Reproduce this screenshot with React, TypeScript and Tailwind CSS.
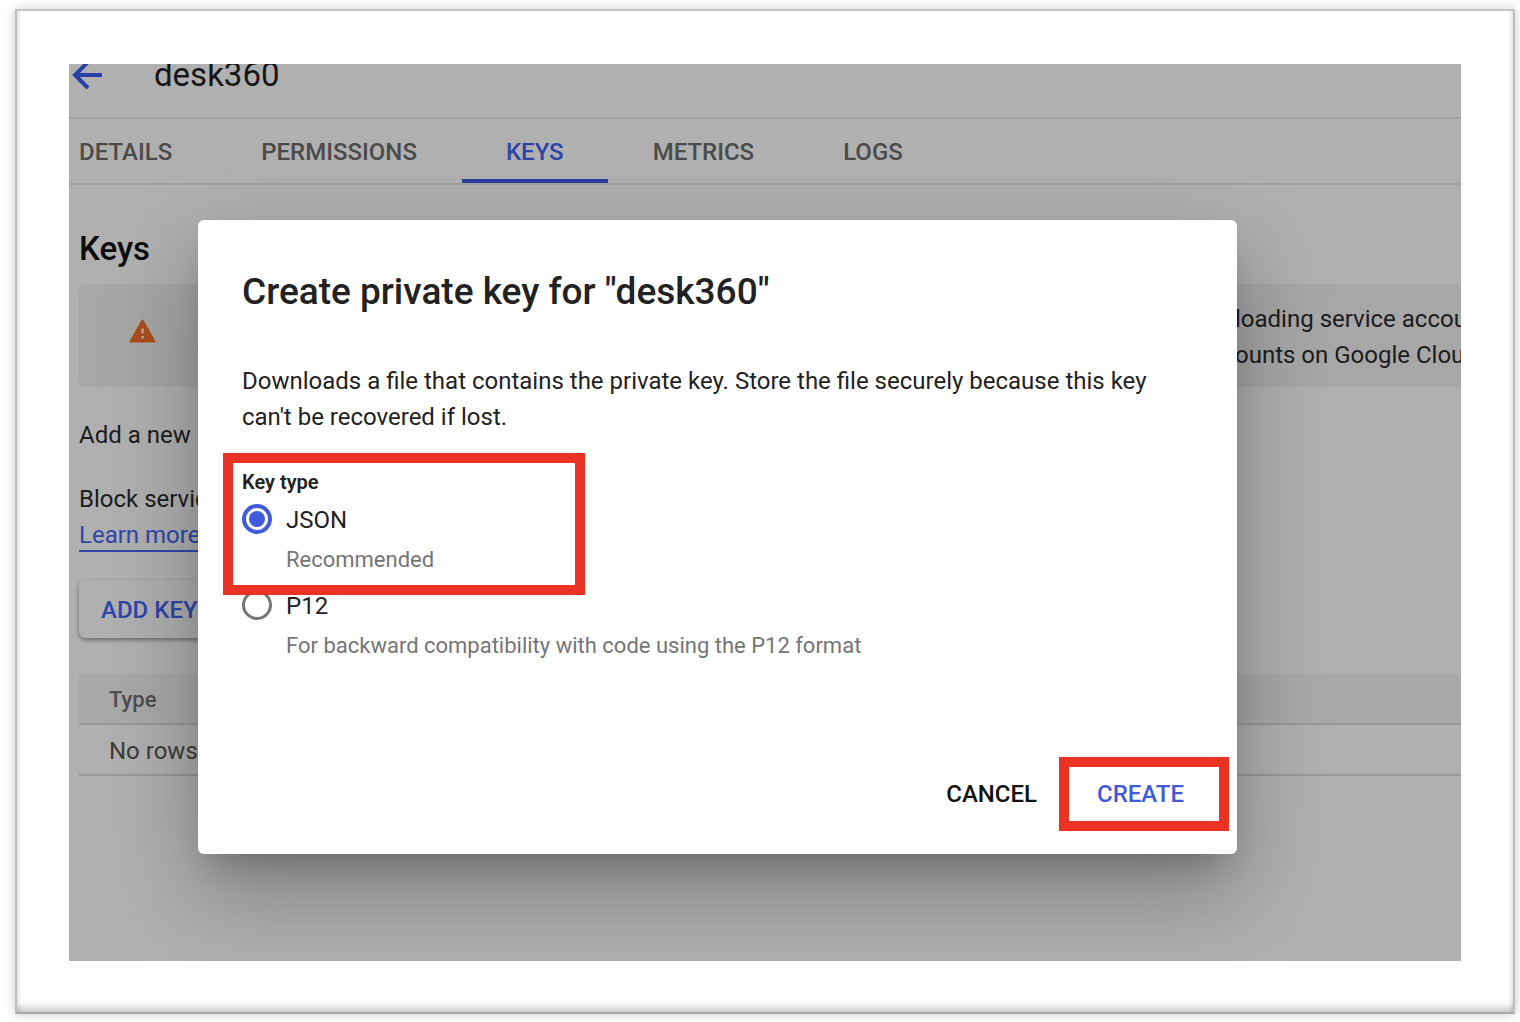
import type { ReactNode } from "react";

const tabs = ["DETAILS", "PERMISSIONS", "KEYS", "METRICS", "LOGS"];

function Header() {
    return (
        <header className="flex h-[55px] items-start border-b-2 border-[#a0a0a0]">
            <button type="button" aria-label="Back" className="-mt-1 ml-[3px]">
                <svg width="30" height="30" viewBox="0 0 30 30" fill="none" stroke="#2a40a4" strokeWidth="4">
                    <path d="M30 15H3M16 2L3 15l13 13" />
                </svg>
            </button>
            <h1 className="-mt-2 ml-[52px] text-[33px] leading-[38px] text-[#161616]">desk360</h1>
        </header>
    );
}

function Tabs() {
    return (
        <nav className="flex h-[66px] gap-px border-b-2 border-[#a0a0a0] pl-[10px] text-2xl font-medium text-[#4b4b4b]">
            {tabs.map((tab) => (
                <a
                    key={tab}
                    href={"#" + tab.toLowerCase()}
                    className={
                        tab === "KEYS"
                            ? "border-b-4 border-[#2a3f9f] px-11 pt-[17px] text-[#2c45a8]"
                            : "px-11 pt-[17px] first:pl-0"
                    }
                >
                    {tab}
                </a>
            ))}
        </nav>
    );
}

function KeysPage() {
    return (
        <section className="pl-[10px] pt-11 text-2xl leading-9 text-[#1c1c1c]">
            <h2 className="text-[33px] font-medium leading-10 text-[#0c0c0c]">Keys</h2>

            <div className="mt-[15px] flex h-[103px] items-center justify-between rounded-l-md bg-[#a7a7a7]">
                <svg className="mb-[10px] ml-[50px]" width="27" height="24" viewBox="0 0 27 24">
                    <path d="M13.5 1.5L25.5 22.5H1.5z" fill="#ab4e1c" stroke="#ab4e1c" strokeWidth="2" strokeLinejoin="round" />
                    <path d="M13.5 9.5v5M13.5 17v2.5" stroke="#b9aaa0" strokeWidth="2.5" />
                </svg>
                <p className="w-[226px] overflow-hidden whitespace-nowrap pt-[3px]">
                    loading service account
                    <br />
                    ounts on Google Cloud
                </p>
            </div>

            <p className="mt-[30px]">Add a new</p>
            <p className="mt-7">Block service</p>
            <a href="#learn" className="inline-block border-b-2 border-[#2f47ab] leading-[30px] text-[#2f47ab]">
                Learn more
            </a>

            <div className="mt-[27px]">
                <button
                    type="button"
                    className="h-[58px] rounded-md bg-[#b0b0b0] px-[22px] pt-0.5 text-2xl font-medium text-[#2f47ab] shadow-[0_2px_4px_rgba(0,0,0,0.4)]"
                >
                    ADD KEY
                </button>
            </div>

            <table className="mt-9 w-full text-left">
                <thead>
                    <tr className="h-[50px] border-b-2 border-[#999] bg-[#a9a9a9] text-[22px] text-[#4e4e4e]">
                        <th className="pl-[30px] pt-[3px] font-medium">Type</th>
                    </tr>
                </thead>
                <tbody>
                    <tr className="h-[51px] border-b-2 border-[#999] text-[#3c3c3c]">
                        <td className="pl-[30px] pt-0.5">No rows</td>
                    </tr>
                </tbody>
            </table>
        </section>
    );
}

type KeyOptionProps = {
    value: string;
    hint: string;
    checked?: boolean;
};

function KeyOption({ value, hint, checked }: KeyOptionProps) {
    return (
        <div className="grid grid-cols-[44px_1fr] items-center">
            <input
                id={value}
                type="radio"
                name="key-type"
                defaultChecked={checked}
                className="size-[30px] appearance-none rounded-full border-[3px] border-[#757575] bg-clip-content p-1 checked:p-[3px] checked:border-4 checked:border-[#3f5bdc] checked:bg-[#3f5bdc]"
            />
            <label htmlFor={value} className="pt-0.5 text-2xl leading-[42px] text-[#222]">
                {value}
            </label>
            <p className="col-start-2 pt-0.5 text-[22px] leading-[34px] text-[#757575]">{hint}</p>
        </div>
    );
}

function Highlight({ className, children }: { className: string; children?: ReactNode }) {
    return <div className={"pointer-events-none absolute border-[10px] border-[#ea3323] " + className}>{children}</div>;
}

function CreateKeyDialog() {
    return (
        <div
            role="dialog"
            aria-labelledby="dialog-title"
            className="relative w-full rounded-md bg-white px-11 pb-[31px] pt-[50px] shadow-[0_20px_28px_-12px_rgba(0,0,0,0.2),0_36px_90px_4px_rgba(0,0,0,0.28)]"
        >
            <h2 id="dialog-title" className="text-[37px] font-medium leading-[44px] text-[#222]">
                Create private key for "desk360"
            </h2>
            <p className="mt-[49px] text-2xl leading-9 text-[#222]">
                Downloads a file that contains the private key. Store the file securely because this key can't be
                recovered if lost.
            </p>

            <fieldset className="mt-8">
                <legend className="text-xl font-semibold leading-[30px] text-[#222]">Key type</legend>
                <div className="grid gap-[6px]">
                    <KeyOption value="JSON" hint="Recommended" checked />
                    <KeyOption value="P12" hint="For backward compatibility with code using the P12 format" />
                </div>
            </fieldset>

            <div className="mt-[102px] flex justify-end gap-[60px] pr-[9px] text-2xl font-medium">
                <button type="button" className="h-[58px] text-[#111]">
                    CANCEL
                </button>
                <div className="relative">
                    <button type="button" className="h-[58px] text-[#3f5bdc]">
                        CREATE
                    </button>
                    <Highlight className="-inset-y-2 -left-[38px] -right-[45px]" />
                </div>
            </div>

            <Highlight className="left-[25px] top-[233px] h-[142px] w-[362px]" />
        </div>
    );
}

export default function App() {
    return (
        <main className="flex min-h-screen flex-col bg-white pb-2 pl-[15px] pr-[5px] pt-[9px] font-[Roboto,sans-serif]">
            <div className="flex flex-1 flex-col border-2 border-b-[#a9a9a9] border-l-[#bfbfbf] border-r-[#bfbfbf] border-t-[#c6c6c6] px-[52px] pb-[51px] pt-[53px] shadow-[0_0_10px_rgba(0,0,0,0.22),inset_0_-10px_8px_-6px_rgba(0,0,0,0.24),inset_-6px_0_5px_-5px_rgba(0,0,0,0.16),inset_6px_0_5px_-5px_rgba(0,0,0,0.16)]">
                <div className="relative flex-1 overflow-hidden bg-[#b0b0b0]">
                    <Header />
                    <Tabs />
                    <KeysPage />
                    <div className="absolute inset-0 flex items-start pl-[129px] pr-56 pt-[156px]">
                        <CreateKeyDialog />
                    </div>
                </div>
            </div>
        </main>
    );
}
